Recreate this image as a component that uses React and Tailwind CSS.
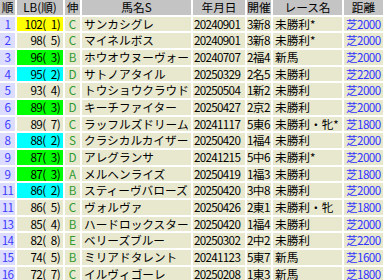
import React from "react";

const rows = [
  ["1", "102(\u20021)", "y", "C", "サンカシグレ", "20240901", "3新8", "未勝利*", "芝2000"],
  ["2", "98(\u20025)", "", "C", "マイネルボス", "20240901", "3新8", "未勝利*", "芝2000"],
  ["3", "96(\u20023)", "g", "B", "ホウオウヌーヴォー", "20240707", "2福4", "新馬", "芝2000"],
  ["4", "95(\u20022)", "c", "D", "サトノアタイル", "20250329", "2名5", "未勝利", "芝2200"],
  ["5", "93(\u20024)", "", "C", "トウショウクラウド", "20250504", "1新2", "未勝利", "芝2000"],
  ["6", "89(\u20023)", "g", "D", "キーチファイター", "20250427", "2京2", "未勝利", "芝2000"],
  ["6", "89(\u20027)", "", "C", "ラッフルズドリーム", "20241117", "5東6", "未勝利・牝*", "芝1800"],
  ["8", "88(\u20022)", "c", "S", "クラシカルカイザー", "20250420", "1福4", "未勝利", "芝2000"],
  ["9", "87(\u20023)", "g", "D", "アレグランサ", "20241215", "5中6", "未勝利*", "芝2000"],
  ["9", "87(\u20023)", "g", "A", "メルヘンライズ", "20250419", "1福3", "未勝利", "芝1800"],
  ["11", "86(\u20022)", "c", "B", "スティーヴバローズ", "20250420", "3中8", "未勝利", "芝2000"],
  ["11", "86(\u20025)", "", "C", "ヴォルヴァ", "20250426", "2東1", "未勝利・牝", "芝1800"],
  ["13", "85(\u20024)", "", "B", "ハードロックスター", "20250420", "1福4", "未勝利", "芝2000"],
  ["14", "82(\u20028)", "", "E", "ベリーズブルー", "20250302", "2中2", "未勝利", "芝2200"],
  ["15", "74(\u20025)", "", "B", "ミリアドタレント", "20241123", "5東7", "新馬", "芝1600"],
  ["16", "72(\u20027)", "", "C", "イルヴィゴーレ", "20250208", "1東3", "新馬", "芝1800"],
];

const lbBg = {
  y: "bg-[#ffff00]",
  g: "bg-[#00ff00]",
  c: "bg-[#00ffff]",
  "": "bg-[#e8e8cf]",
};

const headers = ["順", "LB(順)", "伸", "馬名S", "年月日", "開催", "レース名", "距離"];

export default function App() {
  return (
    <div
      className="w-[383px] h-[280px] overflow-hidden bg-white text-[11.67px] text-black"
      style={{ fontFamily: '"Noto Sans CJK JP", "Noto Sans", sans-serif' }}
    >
      <div className="grid grid-cols-[15px_46px_15px_109px_52px_24px_69px_39px] auto-rows-[14.667px] gap-[2px] leading-[14.667px]">
        {headers.map((h) => (
          <div key={h} className="bg-[#c4c4c4] text-center whitespace-nowrap">
            {h}
          </div>
        ))}
        {rows.map((r, i) => (
          <React.Fragment key={i}>
            <div className="bg-[#dcdcff] text-[#3c3cff] text-center tracking-[-0.6px]">{r[0]}</div>
            <div className={`${lbBg[r[2]]} text-right pr-[3px] whitespace-nowrap tracking-[-0.6px]`}>{r[1]}</div>
            <div className="bg-[#e8e8cf] text-[#2f9a2f] text-center">{r[3]}</div>
            <div className="bg-[#e8e8cf] pl-[2px] whitespace-nowrap overflow-hidden">{r[4]}</div>
            <div className="bg-[#e8e8cf] pl-[1px] tracking-[-0.7px]">{r[5]}</div>
            <div className="bg-[#e8e8cf] whitespace-nowrap overflow-hidden tracking-[-0.6px]">{r[6]}</div>
            <div className="bg-[#e8e8cf] pl-[2px] whitespace-nowrap overflow-hidden">{r[7]}</div>
            <div className="bg-[#e8e8cf] text-[#3333ff] pl-[2px] whitespace-nowrap overflow-hidden tracking-[-0.6px]">{r[8]}</div>
          </React.Fragment>
        ))}
      </div>
    </div>
  );
}
